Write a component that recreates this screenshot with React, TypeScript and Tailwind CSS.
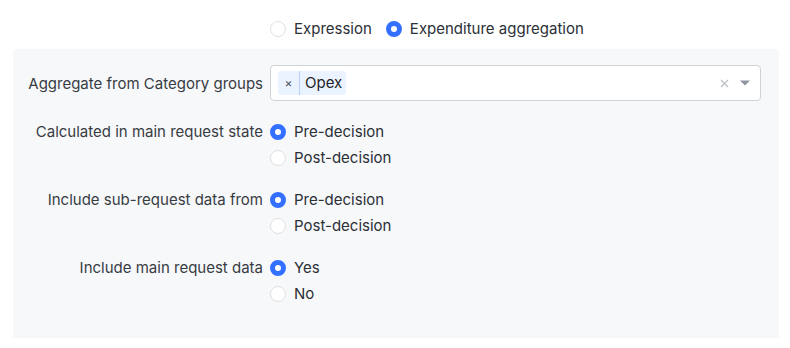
import React from "react";

function Radio({ checked, label }: { checked?: boolean; label: string }) {
  return (
    <div className="flex items-center h-[26px]">
      {checked ? (
        <span className="w-4 h-4 rounded-full border-[5px] border-[#3370ff] bg-white box-border shrink-0" />
      ) : (
        <span className="w-4 h-4 rounded-full border border-[#dee0e3] bg-white box-border shrink-0" />
      )}
      <span className="ml-2 text-[15px] text-[#2b2f36] leading-[26px]">{label}</span>
    </div>
  );
}

function Row({ label, children, className = "" }: { label: string; children: React.ReactNode; className?: string }) {
  return (
    <div className={"flex items-start " + className}>
      <div className="w-[250px] shrink-0 text-right text-[15px] text-[#373c43] leading-[26px]">{label}</div>
      <div className="ml-[7px]">{children}</div>
    </div>
  );
}

export default function App() {
  return (
    <div className="w-[790px] h-[348px] bg-white" style={{ fontFamily: "Inter, 'Noto Sans', sans-serif" }}>
      <div className="h-[49px] pl-[270px] pt-[8px] flex items-center gap-[14px]">
        <Radio label="Expression" />
        <Radio checked label="Expenditure aggregation" />
      </div>
      <div className="ml-[13px] w-[766px] h-[289px] bg-[#f7f8fa] pt-4">
        <div className="flex items-center">
          <div className="w-[250px] shrink-0 text-right text-[15px] text-[#373c43] pt-[2px]">Aggregate from Category groups</div>
          <div className="ml-[7px] w-[491px] h-[36px] rounded-[4px] border border-[#d0d3d6] bg-white flex items-center pl-[7px] pr-[10px]">
            <div className="flex items-center h-[24px] bg-[#eaf3ff] rounded-[3px]">
              <span className="w-[21px] text-center text-[12px] text-[#51565d] leading-none">×</span>
              <span className="w-px h-[24px] bg-[#b5d3fb]" />
              <span className="pl-[5px] pr-[4px] text-[15px] text-[#1f2329]">Opex</span>
            </div>
            <div className="flex-1" />
            <svg width="9" height="9" viewBox="0 0 9 9" className="mr-[11px]">
              <path d="M1 1 L8 8 M8 1 L1 8" stroke="#bbbfc4" strokeWidth="1.2" />
            </svg>
            <svg width="10" height="6" viewBox="0 0 10 6">
              <path d="M0 0.5 L10 0.5 L5 5.5 Z" fill="#8f959e" />
            </svg>
          </div>
        </div>
        <Row label="Calculated in main request state" className="mt-[18px]">
          <Radio checked label="Pre-decision" />
          <Radio label="Post-decision" />
        </Row>
        <Row label="Include sub-request data from" className="mt-4">
          <Radio checked label="Pre-decision" />
          <Radio label="Post-decision" />
        </Row>
        <Row label="Include main request data" className="mt-4">
          <Radio checked label="Yes" />
          <Radio label="No" />
        </Row>
      </div>
    </div>
  );
}
